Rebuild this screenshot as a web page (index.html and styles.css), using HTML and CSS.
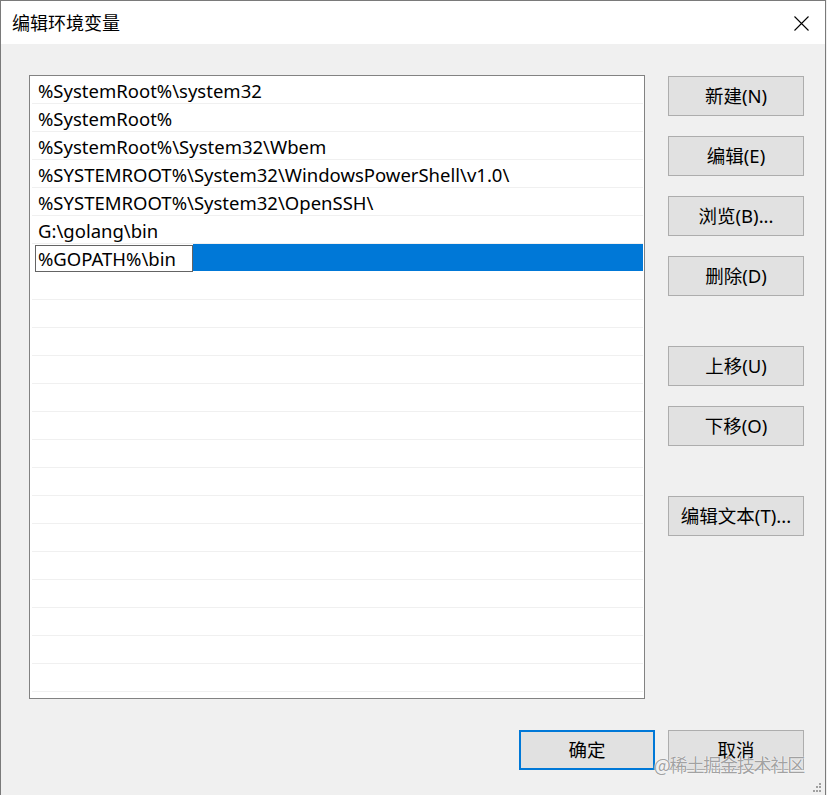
FILE: index.html
```html
<!DOCTYPE html>
<html lang="zh-CN">
<head>
<meta charset="utf-8">
<title>编辑环境变量</title>
<link rel="stylesheet" href="styles.css">
</head>
<body>
<div class="window">
  <div class="titlebar">
    <span class="title">编辑环境变量</span>
    <svg class="close" width="15" height="15" viewBox="0 0 15 15"><path d="M0.5 0.5L14.5 14.5M14.5 0.5L0.5 14.5" stroke="#000" stroke-width="1.1" fill="none"/></svg>
  </div>
  <div class="content">
    <div class="main">
      <div class="list">
        <div class="row">%SystemRoot%\system32</div>
        <div class="row">%SystemRoot%</div>
        <div class="row">%SystemRoot%\System32\Wbem</div>
        <div class="row">%SYSTEMROOT%\System32\WindowsPowerShell\v1.0\</div>
        <div class="row">%SYSTEMROOT%\System32\OpenSSH\</div>
        <div class="row">G:\golang\bin</div>
        <div class="row selected"><span class="editbox">%GOPATH%\bin</span><span class="fill"></span></div>
        <div class="row"></div>
        <div class="row"></div>
        <div class="row"></div>
        <div class="row"></div>
        <div class="row"></div>
        <div class="row"></div>
        <div class="row"></div>
        <div class="row"></div>
        <div class="row"></div>
        <div class="row"></div>
        <div class="row"></div>
        <div class="row"></div>
        <div class="row"></div>
        <div class="row"></div>
        <div class="row"></div>
      </div>
      <div class="side">
        <div class="group">
          <button class="btn">新建(N)</button>
          <button class="btn">编辑(E)</button>
          <button class="btn">浏览(B)...</button>
          <button class="btn">删除(D)</button>
        </div>
        <div class="group">
          <button class="btn">上移(U)</button>
          <button class="btn">下移(O)</button>
        </div>
        <div class="group">
          <button class="btn">编辑文本(T)...</button>
        </div>
      </div>
    </div>
    <div class="footer">
      <button class="btn default">确定</button>
      <button class="btn">取消</button>
    </div>
  </div>
  <div class="watermark">@稀土掘金技术社区</div>
  <svg class="grip" width="8" height="9" viewBox="0 0 8 9"><g fill="#a0a0a0"><rect x="6" y="0" width="2" height="2"/><rect x="3" y="3" width="2" height="2"/><rect x="6" y="3" width="2" height="2"/><rect x="0" y="7" width="2" height="2"/><rect x="3" y="7" width="2" height="2"/><rect x="6" y="7" width="2" height="2"/></g></svg>
</div>
</body>
</html>
```

FILE: styles.css
```css
html, body {
  margin: 0;
  padding: 0;
  background: #f0f0f0;
}
body {
  width: 827px;
  height: 795px;
  overflow: hidden;
  font-family: "Noto Sans", "Noto Sans CJK SC", sans-serif;
  font-size: 18.5px;
  color: #000;
}
.window {
  position: relative;
  box-sizing: border-box;
  width: 826px;
  height: 795px;
  border: 1px solid #7a7a7a;
  border-bottom: none;
  background: #f0f0f0;
  display: flex;
  flex-direction: column;
}
.titlebar {
  height: 43px;
  background: #fff;
  display: flex;
  align-items: center;
  justify-content: space-between;
  padding: 0 16px 0 11px;
  flex-shrink: 0;
}
.title {
  font-family: "Noto Sans CJK SC", sans-serif;
  font-size: 18px;
  line-height: 1;
  margin-top: -2px;
}
.close {
  display: block;
  margin-top: 1px;
}
.content {
  padding: 31px 21px 0 28px;
  display: flex;
  flex-direction: column;
}
.main {
  display: flex;
  gap: 23px;
}
.list {
  box-sizing: border-box;
  width: 616px;
  height: 624px;
  border: 1px solid #828282;
  background: #fff;
  padding: 0 1px;
}
.row {
  box-sizing: border-box;
  height: 28px;
  line-height: 28px;
  padding: 1px 0 0 6px;
  margin: 0 0 0 1px;
  border-bottom: 1px solid #f0f0f0;
  white-space: nowrap;
  display: flex;
}
.row.selected {
  padding: 0 0 0 4px;
  margin-left: 0;
  border-bottom: none;
  height: 28px;
}
.editbox {
  box-sizing: border-box;
  width: 158px;
  height: 27px;
  margin-top: 1px;
  border: 1px solid #646464;
  background: #fff;
  line-height: 26px;
  padding-left: 2px;
}
.fill {
  flex: 1;
  height: 27px;
  background: #0078d7;
}
.side {
  display: flex;
  flex-direction: column;
  gap: 50px;
  padding-top: 1px;
}
.group {
  display: flex;
  flex-direction: column;
  gap: 20px;
}
.btn {
  box-sizing: border-box;
  width: 136px;
  height: 40px;
  background: #e1e1e1;
  border: 1px solid #adadad;
  font-family: "Noto Sans", "Noto Sans CJK SC", sans-serif;
  font-size: 18.5px;
  color: #000;
  padding: 0;
  margin: 0;
  line-height: 1;
}
.btn.default {
  border: 2px solid #0078d7;
}
.footer {
  display: flex;
  justify-content: flex-end;
  gap: 13px;
  margin-top: 31px;
}
.watermark {
  position: absolute;
  right: 21px;
  top: 750px;
  font-family: "Noto Sans CJK SC", sans-serif;
  font-size: 18px;
  letter-spacing: -1.2px;
  color: rgba(120, 120, 120, 0.7);
  text-shadow: 0 0 1px #fff, 0 0 1px #fff;
}
.grip {
  position: absolute;
  right: 4px;
  bottom: 3px;
}
```
